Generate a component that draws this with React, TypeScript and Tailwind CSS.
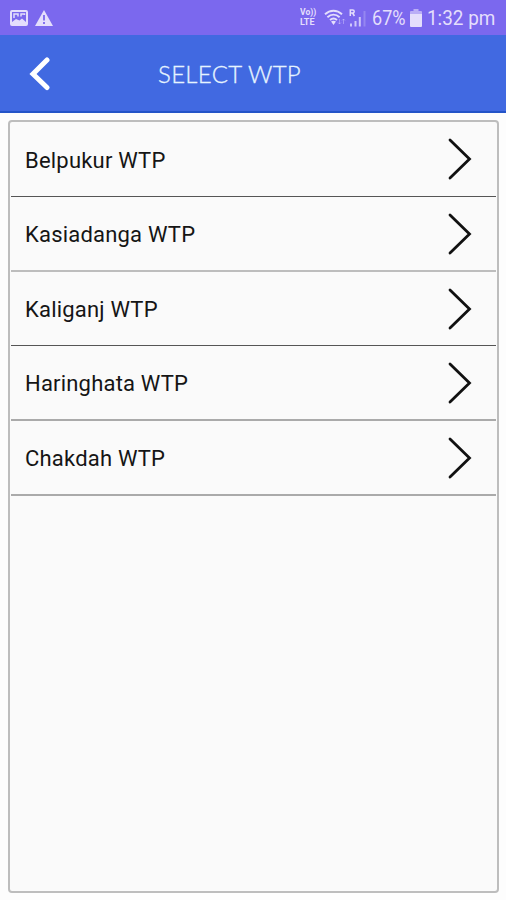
import clsx from "clsx";

interface Plant {
  id: number;
  name: string;
  border: string;
}

// Divider shades vary a little from row to row
const plants: Plant[] = [
  { id: 1, name: "Belpukur WTP", border: "h-[75px] border-b border-[#555555]" },
  { id: 2, name: "Kasiadanga WTP", border: "h-[75px] border-b-2 border-[#bdbdbd]" },
  { id: 3, name: "Kaliganj WTP", border: "h-[74px] border-b border-[#555555]" },
  { id: 4, name: "Haringhata WTP", border: "h-[75px] border-b-2 border-[#aaaaaa]" },
  { id: 5, name: "Chakdah WTP", border: "h-[75px] border-b-2 border-[#aaaaaa]" },
];

function PictureIcon() {
  return (
    <svg viewBox="0 0 18 16" width="18" height="16" fill="none">
      <rect x="1" y="1" width="16" height="14" rx="1" stroke="currentColor" strokeWidth="2" />
      <path d="M2 12l4-3 3.5 1.5 2.5-2 4 3.5v3H2z" fill="currentColor" />
      <path d="M4 8V4h4v2.500M11 6.500V4h3.500v1" stroke="currentColor" strokeWidth="1.5" />
    </svg>
  );
}

function WarningIcon() {
  return (
    <svg viewBox="0 0 18 16" width="18" height="16">
      <path d="M9 0L18 16H0z" fill="currentColor" />
      <path d="M9 5v5.5M9 12v2" stroke="#7b68ee" strokeWidth="1.8" />
    </svg>
  );
}

function WifiIcon() {
  return (
    <svg viewBox="0 0 22 17" width="22" height="17" fill="none" stroke="currentColor">
      <path d="M1 5.3C6 .6 13 .6 18 5.3M3.4 8.2c3.7-3.3 8.5-3.3 12.2 0M6 11c2.2-1.9 4.8-1.9 7 0" strokeWidth="1.9" />
      <path d="M7 12.5L9.5 16l2.5-3.500c-1.5-1-3.5-1-5 0z" fill="currentColor" stroke="none" />
      <path d="M15.5 10v5M14 13.500l1.5 1.500 1.5-1.500M19.500 15v-5M18 11.500l1.500-1.500 1.500 1.500" strokeWidth="1" opacity="0.4" />
    </svg>
  );
}

function SignalIcon() {
  return (
    <svg viewBox="0 0 18 18" width="18" height="18" fill="none" stroke="currentColor">
      <path d="M1.300 7V1h2.400a1.500 1.500 0 010 3H1.500M3.600 4l1.800 3" strokeWidth="1.5" />
      <path d="M2 17.500v-3M6.500 17.500v-5.500M10.800 17.500V8" strokeWidth="2" opacity="0.8" />
      <path d="M15.500 17.500V2" strokeWidth="2" opacity="0.25" />
    </svg>
  );
}

function BatteryIcon() {
  return (
    <svg viewBox="0 0 12 18" width="12" height="18" fill="currentColor">
      <path d="M3.5 0h5v2H11a1 1 0 011 1v2H0V3a1 1 0 011-1h2.500z" opacity="0.6" />
      <path d="M0 5h12V17a1 1 0 01-1 1H1a1 1 0 01-1-1z" />
    </svg>
  );
}

function StatusBar() {
  return (
    <div className="flex h-[35px] items-center bg-[#7b68ee] px-[10px] text-[#e4defc]">
      <div className="flex gap-[7px]">
        <PictureIcon />
        <WarningIcon />
      </div>
      <div className="ml-auto flex items-center">
        <div className="mr-[6px] flex w-[18px] flex-col gap-px text-[9px] font-bold leading-[9px]">
          <span className="inline-block origin-left scale-x-[0.95] whitespace-nowrap">Vo))</span>
          <span>LTE</span>
        </div>
        <WifiIcon />
        <span className="ml-[3px] mr-[5px]">
          <SignalIcon />
        </span>
        <span className="mt-[2px] w-[35px] whitespace-nowrap">
          <span className="inline-block origin-left scale-x-[0.86] text-[21px] leading-[24px]">67%</span>
        </span>
        <span className="ml-[3px] mr-[5px]">
          <BatteryIcon />
        </span>
        <span className="mt-[2px] w-[69px] whitespace-nowrap">
          <span className="inline-block origin-left scale-x-[0.9] text-[21px] leading-[24px]">1:32 pm</span>
        </span>
      </div>
    </div>
  );
}

function Header() {
  return (
    <header className="flex h-[78px] items-center border-b-2 border-[#2454c8] bg-[#4169e1] pl-[29px]">
      <button className="text-white" aria-label="Back">
        <svg viewBox="0 0 22 36" width="22" height="36" fill="none">
          <path d="M18 5L4 19l14 13.5" stroke="currentColor" strokeWidth="5" strokeLinecap="round" />
        </svg>
      </button>
      <h1 className="ml-[107px] mt-px whitespace-nowrap font-['Lato',sans-serif] text-[24px] font-light tracking-[0.3px] text-[#e6f4ff] [-webkit-text-stroke:0.3px_#e6f4ff]">
        SELECT WTP
      </h1>
    </header>
  );
}

export default function App() {
  return (
    <div className="flex h-[900px] w-[506px] flex-col bg-[#fdfdfd] font-['Roboto',sans-serif]">
      <StatusBar />
      <Header />
      <main className="mb-[7px] ml-[8px] mr-[7px] mt-[7px] flex-1 rounded-[4px] border-2 border-[#bdbdbd] bg-[#fafafa]">
        <ul className="mx-px">
          {plants.map((plant) => (
            <li key={plant.id} className={clsx("flex items-center justify-between pl-[14px] pr-[24px]", plant.border)}>
              <span className="mt-[2px] whitespace-nowrap text-[22px] tracking-[0.2px] text-[#151515]">{plant.name}</span>
              <svg viewBox="0 0 24 42" width="24" height="42" fill="none">
                <path d="M2 2l19.5 19L2 40" stroke="#111111" strokeWidth="2.8" strokeLinecap="round" />
              </svg>
            </li>
          ))}
        </ul>
      </main>
    </div>
  );
}
